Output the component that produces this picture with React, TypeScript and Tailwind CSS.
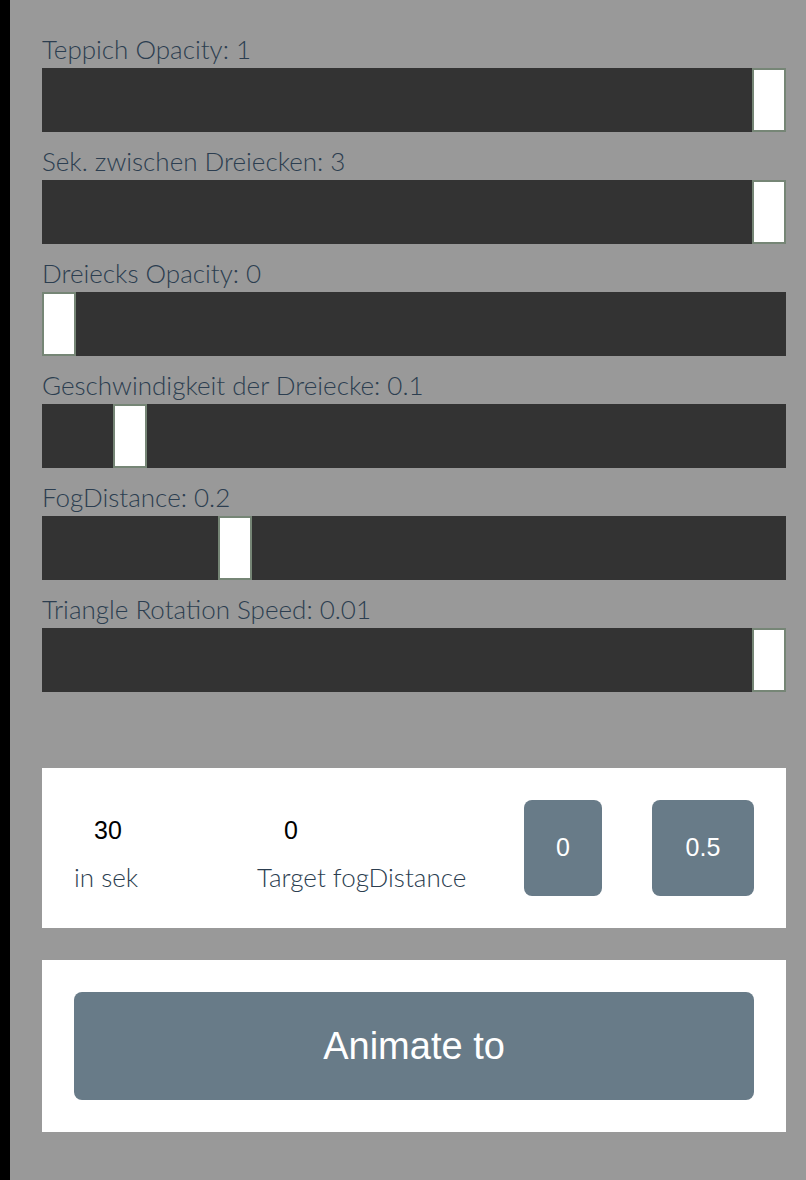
import React from "react"

const sliders = [
  { label: "Teppich Opacity: 1", pos: 1 },
  { label: "Sek. zwischen Dreiecken: 3", pos: 1 },
  { label: "Dreiecks Opacity: 0", pos: 0 },
  { label: "Geschwindigkeit der Dreiecke: 0.1", pos: 0.1 },
  { label: "FogDistance: 0.2", pos: 0.248 },
  { label: "Triangle Rotation Speed: 0.01", pos: 1 },
]

const labelFont = { fontFamily: "Lato, 'Open Sans', sans-serif" }
const formFont = { fontFamily: "'Liberation Sans', Arial, sans-serif" }

function Slider({ label, pos }: { label: string; pos: number }) {
  // thumb is 34px wide, track inner range is 710px
  const left = Math.round(pos * 710)
  return (
    <div className="mb-[15px]">
      <div className="text-[26px] leading-[28px] font-light text-[#2c3e50] mb-[5px]" style={labelFont}>
        {label}
      </div>
      <div className="relative h-16 bg-[#333333]">
        <div
          className="absolute top-0 h-16 w-[34px] bg-white border-2 border-[#768676]"
          style={{ left }}
        />
      </div>
    </div>
  )
}

export default function App() {
  return (
    <div className="flex min-h-[1180px] w-full">
      <div className="w-[10px] shrink-0 bg-black" />
      <div className="flex-1 bg-[#999999] pl-[32px] pr-[20px] pt-[35px]">
        {sliders.map((s) => (
          <Slider key={s.label} label={s.label} pos={s.pos} />
        ))}

        {/* target values */}
        <div className="mt-[76px] bg-white p-8 flex items-start">
          <div className="w-[183px] pt-[14px] flex flex-col">
            <span className="w-[68px] h-8 leading-8 text-center text-[25px] text-black" style={formFont}>
              30
            </span>
            <span className="mt-[17px] text-[26px] leading-[28px] font-light text-[#2c3e50]" style={labelFont}>
              in sek
            </span>
          </div>
          <div className="w-[267px] pt-[14px] flex flex-col">
            <span className="w-[68px] h-8 leading-8 text-center text-[25px] text-black" style={formFont}>
              0
            </span>
            <span
              className="mt-[17px] text-[26px] leading-[28px] font-light text-[#2c3e50] whitespace-nowrap"
              style={labelFont}
            >
              Target fogDistance
            </span>
          </div>
          <button className="w-[78px] h-24 rounded-lg bg-[#687b88] text-white text-[25px]" style={formFont}>
            0
          </button>
          <button className="ml-[50px] w-[102px] h-24 rounded-lg bg-[#687b88] text-white text-[25px]" style={formFont}>
            0.5
          </button>
        </div>

        <div className="mt-8 bg-white p-8">
          <button className="w-full h-[108px] rounded-lg bg-[#687b88] text-white text-[38px]" style={formFont}>
            Animate to
          </button>
        </div>
      </div>
    </div>
  )
}
